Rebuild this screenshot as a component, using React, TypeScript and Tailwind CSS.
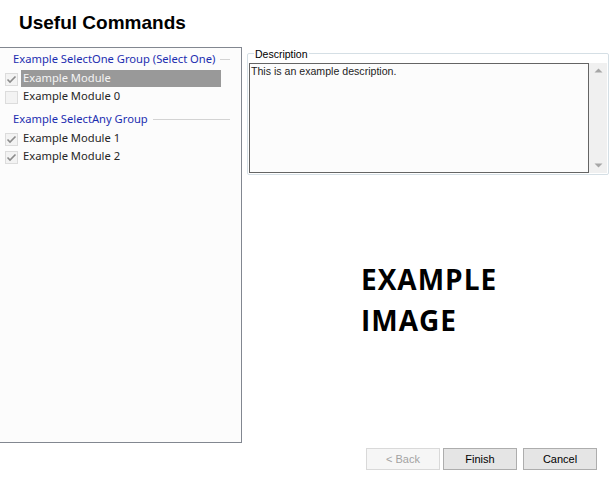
import React from "react";

const Check = ({ checked }: { checked: boolean }) => (
  <div className="w-[13px] h-[13px] border border-[#dcdcdc] bg-[#f3f3f3] flex items-center justify-center shrink-0">
    {checked && (
      <svg width="11" height="11" viewBox="0 0 11 11">
        <path d="M1.5 5.5 L4 8 L9.5 2.5" fill="none" stroke="#8c8c8c" strokeWidth="1.6" />
      </svg>
    )}
  </div>
);

const Item = ({ label, checked, selected }: { label: string; checked: boolean; selected?: boolean }) => (
  <div className="flex items-center h-[18px] pl-[5px]">
    <Check checked={checked} />
    <div
      className={
        "ml-[3px] h-[17px] w-[200px] pl-[2px] flex items-center self-start " +
        (selected ? "bg-[#999999] text-[#f4f4f4]" : "text-[#262626]")
      }
    >
      {label}
    </div>
  </div>
);

const Header = ({ label }: { label: string }) => (
  <div className="flex items-center h-[18px] pl-[13px] pr-[11px] text-[#1b2db0]">
    <span className="whitespace-nowrap">{label}</span>
    <div className="flex-1 ml-[5px] h-px bg-[#d3d3d3]" />
  </div>
);

const Btn = ({ label, disabled, className }: { label: string; disabled?: boolean; className?: string }) => (
  <div
    className={
      "w-[74px] h-[22px] flex items-center justify-center border text-[11px] " +
      (disabled
        ? "border-[#d9d9d9] bg-[#f6f6f6] text-[#a3a3a3] "
        : "border-[#adadad] bg-[#e5e5e5] text-black ") +
      (className ?? "")
    }
  >
    {label}
  </div>
);

export default function App() {
  return (
    <div
      className="w-[609px] h-[481px] bg-white flex flex-col overflow-hidden"
      style={{ fontFamily: '"Liberation Sans", Arial, sans-serif' }}
    >
      <div className="h-[47px] pl-[19px] pt-[12px] text-[19px] leading-[22px] font-bold text-black shrink-0">
        Useful Commands
      </div>

      <div className="flex h-[396px] shrink-0">
        <div
          className="w-[242px] h-full border-t border-r border-b border-[#828790] bg-[#fcfcfc] pt-[2px] text-[11.2px]"
          style={{ fontFamily: '"Noto Sans", "Liberation Sans", sans-serif' }}
        >
          <Header label="Example SelectOne Group (Select One)" />
          <div className="h-[2px]" />
          <Item label="Example Module" checked selected />
          <Item label="Example Module 0" checked={false} />
          <div className="h-[4px]" />
          <Header label="Example SelectAny Group" />
          <div className="h-[2px]" />
          <Item label="Example Module 1" checked />
          <Item label="Example Module 2" checked />
        </div>

        <div className="flex-1 flex flex-col pl-[5px] pt-[6px]">
          <div className="relative w-[362px] h-[122px] border border-[#d5dfe5] rounded-[2px] pt-[9px] px-px pb-px">
            <span className="absolute left-[6px] top-[-6px] px-px bg-white text-[10.5px] leading-[13px] text-black">
              Description
            </span>
            <div className="flex h-full">
              <div className="w-[341px] h-full border border-[#646464] bg-[#fcfcfc] pl-px pt-px text-[10.6px] leading-[13px] text-[#1e1e1e]">
                This is an example description.
              </div>
              <div className="w-[18px] h-full bg-[#f0f0f0] flex flex-col items-center justify-between py-[5px]">
                <svg width="9" height="5" viewBox="0 0 9 5">
                  <path d="M0.5 4.5 L4.5 0.5 L8.5 4.5 Z" fill="#a6a6a6" />
                </svg>
                <svg width="9" height="5" viewBox="0 0 9 5">
                  <path d="M0.5 0.5 L4.5 4.5 L8.5 0.5 Z" fill="#a6a6a6" />
                </svg>
              </div>
            </div>
          </div>

          <div
            className="ml-[114px] mt-[84px] text-[28px] leading-[41px] font-bold tracking-[1px] text-black"
            style={{ fontFamily: '"Open Sans", sans-serif' }}
          >
            <div>EXAMPLE</div>
            <div>IMAGE</div>
          </div>
        </div>
      </div>

      <div className="flex justify-end pr-[12px] pt-[5px]">
        <Btn label="< Back" disabled />
        <Btn label="Finish" className="ml-[3px]" />
        <Btn label="Cancel" className="ml-[6px]" />
      </div>
    </div>
  );
}
